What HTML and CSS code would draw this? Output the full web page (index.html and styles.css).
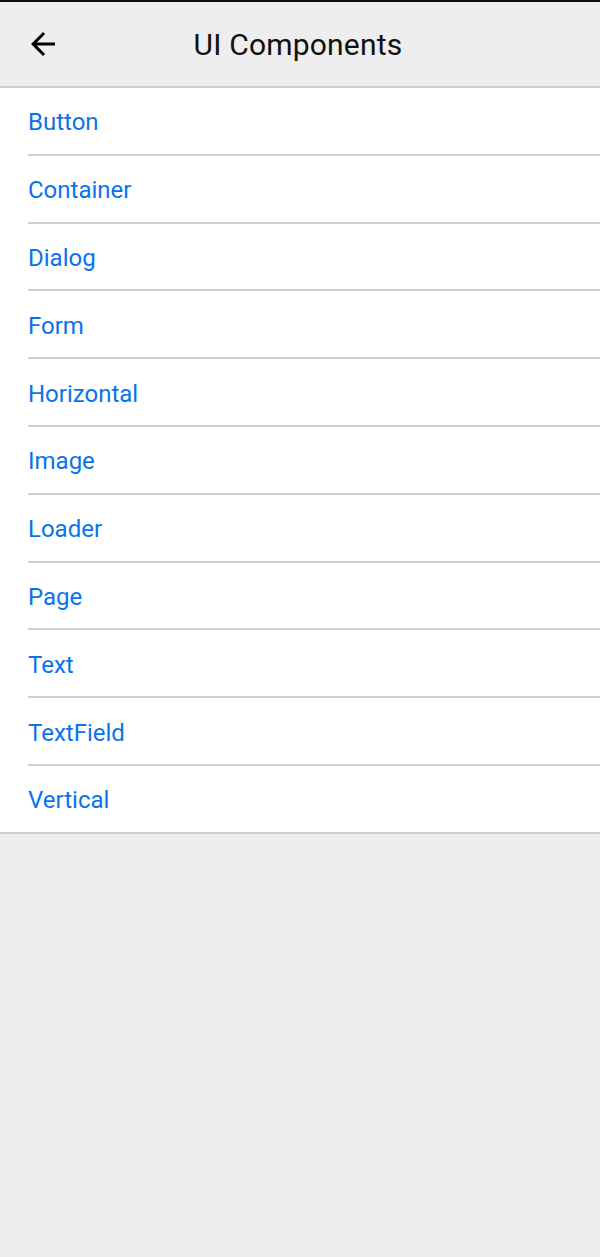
FILE: index.html
```html
<!DOCTYPE html>
<html>
<head>
<meta charset="utf-8">
<link rel="stylesheet" href="styles.css">
</head>
<body>
<div class="topline"></div>
<header class="bar">
  <button class="back" aria-label="Back">
    <svg width="36" height="36" viewBox="0 0 24 24"><path d="M20 11H7.83l5.59-5.59L12 4l-8 8 8 8 1.41-1.41L7.83 13H20v-2z" fill="#000"/></svg>
  </button>
  <h1 class="title">UI Components</h1>
  <div class="spacer"></div>
</header>
<ul class="list">
  <li class="item"><span>Button</span></li>
  <li class="item"><span>Container</span></li>
  <li class="item"><span>Dialog</span></li>
  <li class="item"><span>Form</span></li>
  <li class="item"><span>Horizontal</span></li>
  <li class="item"><span>Image</span></li>
  <li class="item"><span>Loader</span></li>
  <li class="item"><span>Page</span></li>
  <li class="item"><span>Text</span></li>
  <li class="item"><span>TextField</span></li>
  <li class="item"><span>Vertical</span></li>
</ul>
</body>
</html>
```
FILE: styles.css
```css
html, body {
  margin: 0;
  padding: 0;
  background: #eeeeee;
  font-family: Roboto, "Liberation Sans", sans-serif;
}
.topline {
  height: 2px;
  background: #111;
}
.bar {
  height: 84px;
  display: grid;
  grid-template-columns: 1fr auto 1fr;
  align-items: center;
  padding: 0 29px 0 25px;
  border-bottom: 2px solid #cfcfcf;
  background: #eeeeee;
}
.back {
  justify-self: start;
  width: 36px;
  height: 36px;
  padding: 0;
  border: 0;
  background: none;
  display: flex;
}
.title {
  margin: 0;
  font-weight: 400;
  font-size: 30px;
  color: #111;
  letter-spacing: 0.2px;
}
.list {
  list-style: none;
  margin: 0;
  padding: 0 0 0 28px;
  background: #fff;
  border-bottom: 2px solid #cfcfcf;
}
.item {
  height: 62.8px;
  padding-top: 3px;
  display: flex;
  align-items: center;
  border-bottom: 2px solid #cfcfcf;
  font-size: 24px;
  color: #0a73eb;
}
.item:last-child {
  border-bottom: 0;
}
```
